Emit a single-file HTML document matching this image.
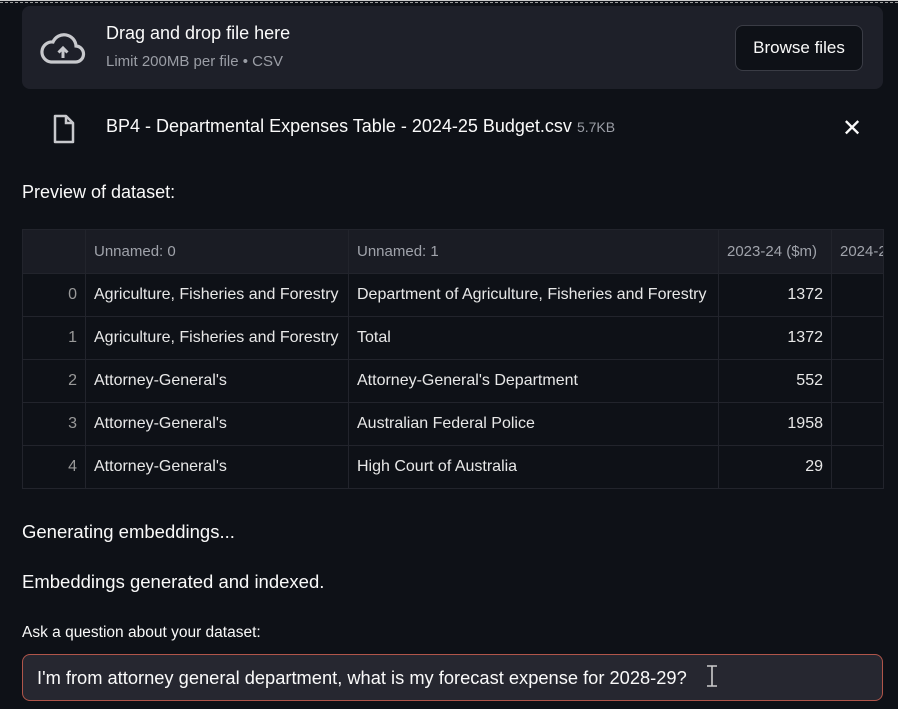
<!DOCTYPE html>
<html><head><style>
*{margin:0;padding:0;box-sizing:border-box}
body{width:898px;height:709px;background:#0e1117;color:#fafafa;font-family:"Liberation Sans",sans-serif;position:relative;overflow:hidden}
.a{position:absolute;white-space:nowrap}
.top{position:absolute;left:0;top:0;width:898px;height:3px;border-top:1px solid #ccc;border-bottom:1px dashed #999}
.up{position:absolute;left:22px;top:6px;width:861px;height:83px;background:#1e2029;border-radius:8px}
.btn{position:absolute;left:735px;top:25px;width:128px;height:46px;background:#0e1117;border:1px solid #3a3c45;border-radius:8px;font-size:17px;line-height:44px;text-align:center}
table{position:absolute;left:22px;top:229px;width:861px;border-collapse:collapse;font-size:16px;table-layout:fixed}
td{height:43px;border:1px solid #22242c;padding:0 8px;color:#e8e8e8;white-space:nowrap;overflow:hidden}
tr.h td{color:#a0a3ab;background:#1a1c24;height:44px;font-size:15px}
td.i{color:#999;text-align:right}
td.n{text-align:right}
.inp{position:absolute;left:22px;top:654px;width:861px;height:47px;background:#262730;border:1px solid #b0554a;border-radius:8px;font-size:18.3px;line-height:45px;padding-left:14px}
</style></head><body>
<div class="top"></div>
<div class="up"></div>
<svg class="a" style="left:40px;top:32px" width="46" height="34" viewBox="0 0 46 34"><path d="M11 30h24a8 8 0 0 0 1-16A12 12 0 0 0 13 10 10 10 0 0 0 11 30z" fill="none" stroke="#c8c9cd" stroke-width="3.2"/><path d="M23 26v-9M18.5 20.5 23 16l4.5 4.5" stroke="#c8c9cd" stroke-width="3" fill="none"/></svg>
<div class="a" style="left:106px;top:23px;font-size:18px">Drag and drop file here</div>
<div class="a" style="left:106px;top:53px;font-size:15px;color:#9b9ea6">Limit 200MB per file • CSV</div>
<div class="btn">Browse files</div>
<svg class="a" style="left:52px;top:113px" width="24" height="32" viewBox="0 0 24 32"><path d="M3 3h11l7 7v19H3z" fill="none" stroke="#c8c9cd" stroke-width="2.5" stroke-linejoin="round"/><path d="M14 3v7h7" fill="none" stroke="#c8c9cd" stroke-width="2.5"/></svg>
<div class="a" style="left:106px;top:116px;font-size:18px">BP4 - Departmental Expenses Table - 2024-25 Budget.csv <span style="font-size:14px;color:#9b9ea6">5.7KB</span></div>
<div class="a" style="left:842px;top:114px;font-size:24px">✕</div>
<div class="a" style="left:22px;top:182px;font-size:18px">Preview of dataset:</div>
<table>
<colgroup><col style="width:63px"><col style="width:263px"><col style="width:370px"><col style="width:113px"><col style="width:52px"></colgroup>
<tr class="h"><td class="i"></td><td>Unnamed: 0</td><td>Unnamed: 1</td><td>2023-24 ($m)</td><td>2024-2</td></tr>
<tr><td class="i">0</td><td>Agriculture, Fisheries and Forestry</td><td>Department of Agriculture, Fisheries and Forestry</td><td class="n">1372</td><td></td></tr>
<tr><td class="i">1</td><td>Agriculture, Fisheries and Forestry</td><td>Total</td><td class="n">1372</td><td></td></tr>
<tr><td class="i">2</td><td>Attorney-General's</td><td>Attorney-General's Department</td><td class="n">552</td><td></td></tr>
<tr><td class="i">3</td><td>Attorney-General's</td><td>Australian Federal Police</td><td class="n">1958</td><td></td></tr>
<tr><td class="i">4</td><td>Attorney-General's</td><td>High Court of Australia</td><td class="n">29</td><td></td></tr>
</table>
<div class="a" style="left:22px;top:521px;font-size:18.5px">Generating embeddings...</div>
<div class="a" style="left:22px;top:571px;font-size:18.5px">Embeddings generated and indexed.</div>
<div class="a" style="left:22px;top:624px;font-size:15.5px">Ask a question about your dataset:</div>
<div class="inp">I'm from attorney general department, what is my forecast expense for 2028-29?</div>
<svg class="a" style="left:705px;top:664px" width="14" height="24" viewBox="0 0 14 24"><path d="M2 2h10M7 2v20M2 22h10" stroke="#ccc" stroke-width="1.6" fill="none"/></svg>
</body></html>
